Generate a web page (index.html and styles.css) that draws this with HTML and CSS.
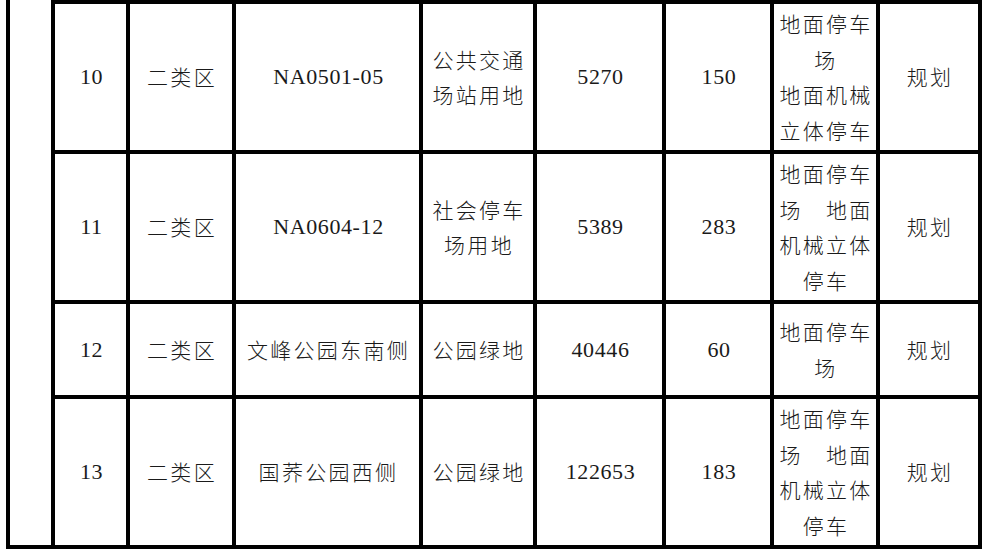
FILE: index.html
```html
<!DOCTYPE html>
<html lang="zh-CN">
<head>
<meta charset="utf-8">
<link rel="stylesheet" href="styles.css">
</head>
<body>
<div class="sheet">
  <div class="cat"></div>

  <div class="c num">10</div>
  <div class="c">二类区</div>
  <div class="c num">NA0501-05</div>
  <div class="c">公共交通场站用地</div>
  <div class="c num">5270</div>
  <div class="c num">150</div>
  <div class="c">地面停车场<br>地面机械立体停车</div>
  <div class="c">规划</div>

  <div class="c num">11</div>
  <div class="c">二类区</div>
  <div class="c num">NA0604-12</div>
  <div class="c">社会停车场用地</div>
  <div class="c num">5389</div>
  <div class="c num">283</div>
  <div class="c">地面停车场　地面机械立体停车</div>
  <div class="c">规划</div>

  <div class="c num">12</div>
  <div class="c">二类区</div>
  <div class="c">文峰公园东南侧</div>
  <div class="c">公园绿地</div>
  <div class="c num">40446</div>
  <div class="c num">60</div>
  <div class="c">地面停车场</div>
  <div class="c">规划</div>

  <div class="c num">13</div>
  <div class="c">二类区</div>
  <div class="c">国荞公园西侧</div>
  <div class="c">公园绿地</div>
  <div class="c num">122653</div>
  <div class="c num">183</div>
  <div class="c">地面停车场　地面机械立体停车</div>
  <div class="c">规划</div>
</div>
</body>
</html>
```

FILE: styles.css
```css
html, body {
  margin: 0;
  padding: 0;
  background: #fff;
}

body {
  width: 989px;
  height: 550px;
  overflow: hidden;
}

.sheet {
  margin-left: 6px;
  display: inline-grid;
  vertical-align: top;
  background: #000;
  padding: 4px;
  gap: 4px;
  grid-template-columns: 41px 71px 102px 183px 110px 125px 104px 102px 98px;
  grid-template-rows: 146px 146px 91px 146px;
}

.cat {
  grid-column: 1;
  grid-row: 1 / 5;
  margin-top: -4px;
  background: #fff;
}

.c {
  background: #fff;
  display: flex;
  align-items: center;
  justify-content: center;
  text-align: center;
  font-family: "Noto Sans CJK SC", sans-serif;
  font-weight: 300;
  font-size: 21px;
  letter-spacing: 2.3px;
  line-height: 35.5px;
  color: #1a1a1a;
  padding: 0 0 0 2px;
}

.c.num {
  font-family: "Liberation Serif", "Times New Roman", serif;
  font-weight: 400;
  font-size: 22px;
  letter-spacing: 0.6px;
}
```
